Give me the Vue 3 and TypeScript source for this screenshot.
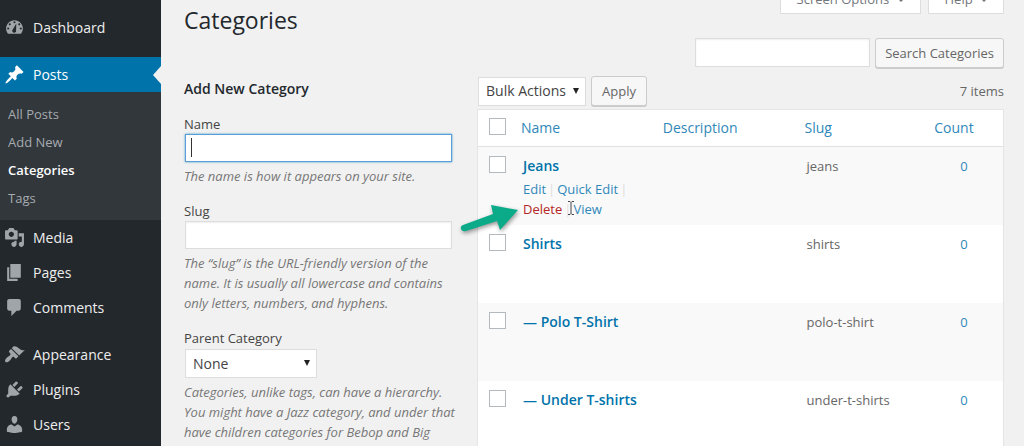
<script setup lang="ts">
import { onMounted, ref } from 'vue'

interface MenuItem {
  label: string
  icon: string
  gap?: boolean
  current?: boolean
  children?: string[]
}

interface Category {
  name: string
  slug: string
  count: number
  actions?: boolean
}

const menu: MenuItem[] = [
  {
    label: 'Dashboard',
    icon: 'M3.76 16h12.48A7.95 7.95 0 0 0 18 11c0-4.41-3.58-8-8-8s-8 3.59-8 8c0 1.9.66 3.63 1.76 5zM10 4a1 1 0 1 1 0 2 1 1 0 0 1 0-2zM5.5 6a1 1 0 1 1 0 2 1 1 0 0 1 0-2zM14.5 6a1 1 0 1 1 0 2 1 1 0 0 1 0-2zM4 10a1 1 0 1 1 0 2 1 1 0 0 1 0-2zM16 10a1 1 0 1 1 0 2 1 1 0 0 1 0-2zM11.7 6.2L11.5 12.5a1.9 1.9 0 1 1-3-.9z'
  },
  {
    label: 'Posts',
    icon: 'M10.44 3.02l1.82-1.82 6.36 6.35-1.83 1.82c-1.05-.68-2.48-.57-3.41.36l-.75.75c-.92.93-1.04 2.35-.35 3.41l-1.83 1.82-2.41-2.41-2.8 2.79c-.42.42-3.38 2.71-3.8 2.29s1.86-3.39 2.28-3.81l2.79-2.79L4.1 9.36l1.83-1.82c1.05.69 2.48.57 3.4-.36l.75-.75c.93-.92 1.05-2.35.36-3.41z',
    gap: true,
    current: true,
    children: ['All Posts', 'Add New', 'Categories', 'Tags']
  },
  {
    label: 'Media',
    icon: 'M13 11V4c0-.55-.45-1-1-1h-1.67L9 1H5L3.67 3H2c-.55 0-1 .45-1 1v7c0 .55.45 1 1 1h10c.55 0 1-.45 1-1zM7 4.5c1.38 0 2.5 1.12 2.5 2.5S8.38 9.5 7 9.5 4.5 8.38 4.5 7 5.62 4.5 7 4.5zM14 6h5v10.5c0 1.38-1.12 2.5-2.5 2.5S14 17.88 14 16.5s1.12-2.5 2.5-2.5c.17 0 .34.02.5.05V9h-3V6zm-4 8.05V13h2v3.5c0 1.38-1.12 2.5-2.5 2.5S7 17.88 7 16.5 8.12 14 9.5 14c.17 0 .34.02.5.05z'
  },
  { label: 'Pages', icon: 'M6 15V2h10v13H6zm-1 1h8v2H3V5h2v11z' },
  {
    label: 'Comments',
    icon: 'M5 2h9c1.1 0 2 .9 2 2v7c0 1.1-.9 2-2 2h-2l-5 5v-5H5c-1.1 0-2-.9-2-2V4c0-1.1.9-2 2-2z'
  },
  {
    label: 'Appearance',
    icon: 'M14.48 11.06L7.41 3.99l1.5-1.5c.5-.56 2.3-.47 3.51.32 1.21.8 1.43 1.28 2.91 2.1 1.18.64 2.45 1.26 4.45.85zm-.71.71L6.7 4.7 4.93 6.47c-.39.39-.39 1.02 0 1.41l1.06 1.06c.39.39.39 1.03 0 1.42-.6.6-1.43 1.11-2.21 1.69-.35.26-.7.53-1.01.84C1.43 14.23.4 16.08 1.4 17.07c.99 1 2.84-.03 4.18-1.36.31-.31.58-.66.85-1.02.57-.78 1.08-1.61 1.69-2.21.39-.39 1.02-.39 1.41 0l1.06 1.06c.39.39 1.02.39 1.41 0z',
    gap: true
  },
  {
    label: 'Plugins',
    icon: 'M13.11 4.36L9.87 7.6 8 5.73l3.24-3.24c.35-.34 1.05-.2 1.56.32.52.51.66 1.21.31 1.55zm-8 1.77l.91-1.12 9.01 9.01-1.19.84c-.71.71-2.63 1.16-3.82 1.16H6.14L4.9 17.26c-.59.59-1.54.59-2.12 0-.59-.58-.59-1.53 0-2.12l1.24-1.24v-3.88c0-1.13.4-3.19 1.09-3.89zm7.26 3.97l3.24-3.24c.34-.35 1.04-.21 1.55.31.52.51.66 1.21.31 1.55l-3.24 3.25z'
  },
  {
    label: 'Users',
    icon: 'M10 9.25c-2.27 0-2.73-3.44-2.73-3.44C7 4.02 7.82 2 9.97 2c2.16 0 2.98 2.02 2.71 3.81 0 0-.41 3.44-2.68 3.44zm0 2.57L12.72 10c2.39 0 4.52 2.33 4.52 4.53v2.49s-3.65 1.13-7.24 1.13c-3.65 0-7.24-1.13-7.24-1.13v-2.49c0-2.25 1.94-4.48 4.47-4.48z'
  }
]

const categories: Category[] = [
  { name: 'Jeans', slug: 'jeans', count: 0, actions: true },
  { name: 'Shirts', slug: 'shirts', count: 0 },
  { name: '— Polo T-Shirt', slug: 'polo-t-shirt', count: 0 },
  { name: '— Under T-shirts', slug: 'under-t-shirts', count: 0 }
]

const name = ref('')
const slug = ref('')
const search = ref('')
const nameField = ref<HTMLInputElement | null>(null)

onMounted(() => nameField.value?.focus())
</script>

<template>
  <div class="admin">
    <nav class="sidebar" aria-label="Main menu">
      <ul class="menu">
        <li v-for="item in menu" :key="item.label" :class="{ gap: item.gap, current: item.current }">
          <a class="menu-link" href="#">
            <svg class="menu-icon" viewBox="0 0 20 20" aria-hidden="true">
              <path :d="item.icon" fill="currentColor" fill-rule="evenodd" />
            </svg>
            <span>{{ item.label }}</span>
          </a>
          <ul v-if="item.children" class="submenu">
            <li v-for="child in item.children" :key="child">
              <a href="#" :class="{ active: child === 'Categories' }">{{ child }}</a>
            </li>
          </ul>
        </li>
      </ul>
    </nav>

    <main class="content">
      <header class="top">
        <h1>Categories</h1>
        <div class="screen-meta">
          <button type="button">Screen Options <span class="chevron"></span></button>
          <button type="button">Help <span class="chevron"></span></button>
        </div>
      </header>

      <form class="search" @submit.prevent>
        <input v-model="search" type="search" aria-label="Search Categories" />
        <button class="button" type="submit">Search Categories</button>
      </form>

      <div class="columns">
        <form class="add-form" @submit.prevent>
          <h2>Add New Category</h2>
          <div class="field">
            <label for="cat-name">Name</label>
            <div class="name-box">
              <input id="cat-name" ref="nameField" v-model="name" type="text" />
              <span v-if="!name" class="text-caret"></span>
            </div>
            <p>The name is how it appears on your site.</p>
          </div>
          <div class="field">
            <label for="cat-slug">Slug</label>
            <input id="cat-slug" v-model="slug" type="text" />
            <p>The “slug” is the URL-friendly version of the name. It is usually all lowercase and contains only letters, numbers, and hyphens.</p>
          </div>
          <div class="field">
            <label for="cat-parent">Parent Category</label>
            <span class="select parent">
              <select id="cat-parent"><option>None</option></select>
            </span>
            <p>Categories, unlike tags, can have a hierarchy. You might have a Jazz category, and under that have children categories for Bebop and Big</p>
          </div>
        </form>

        <section class="list">
          <div class="toolbar">
            <span class="select bulk">
              <select aria-label="Bulk action"><option>Bulk Actions</option></select>
            </span>
            <button class="button" type="button">Apply</button>
            <span class="total">7 items</span>
          </div>
          <table>
            <thead>
              <tr>
                <th class="check"><input type="checkbox" aria-label="Select all" /></th>
                <th class="wide"><a href="#">Name</a></th>
                <th class="wide"><a href="#">Description</a></th>
                <th><a href="#">Slug</a></th>
                <th class="count"><a href="#">Count</a></th>
              </tr>
            </thead>
            <tbody>
              <tr v-for="cat in categories" :key="cat.slug">
                <td class="check"><input type="checkbox" :aria-label="'Select ' + cat.name" /></td>
                <td>
                  <a class="title" href="#">{{ cat.name }}</a>
                  <div v-if="cat.actions" class="actions">
                    <div class="action-line">
                      <a href="#">Edit</a><i>|</i><a href="#">Quick Edit</a><i>|</i>
                    </div>
                    <div class="action-line">
                      <a class="delete" href="#">Delete</a><i>|</i><a href="#">View</a>
                    </div>
                    <svg class="arrow" viewBox="0 0 64 44" aria-hidden="true">
                      <path d="M4 33L34 22 32 13 59 18 41 38 38 29 7 39Q3 40 2 37 1 34 4 33z" fill="#0bab8a" />
                    </svg>
                    <svg class="pointer" viewBox="0 0 8 16" aria-hidden="true">
                      <path d="M1 1.5h2l1 1 1-1h2M4 2.5v11M1 14.5h2l1-1 1 1h2" fill="none" stroke="#444" />
                    </svg>
                  </div>
                </td>
                <td></td>
                <td class="slug">{{ cat.slug }}</td>
                <td class="count"><a href="#">{{ cat.count }}</a></td>
              </tr>
            </tbody>
          </table>
        </section>
      </div>
    </main>
  </div>
</template>

<style>
body {
  margin: 0;
  background: #f1f1f1;
}
</style>

<style scoped>
* {
  box-sizing: border-box;
}

.admin {
  display: flex;
  height: 100vh;
  overflow: hidden;
  background: #f1f1f1;
  color: #444;
  font: 13px/20px 'Open Sans', 'Noto Sans', sans-serif;
}

a {
  color: #3088b9;
  text-decoration: none;
}

ul {
  margin: 0;
  padding: 0;
  list-style: none;
}

input,
select,
button {
  margin: 0;
  font: inherit;
  color: inherit;
}

.sidebar {
  flex: none;
  width: 161px;
  background: #23282d;
}

.gap {
  margin-top: 12px;
}

.menu > li:first-child {
  margin-top: 10px;
}

.menu-link {
  display: flex;
  align-items: center;
  gap: 8px;
  height: 35px;
  padding-left: 4px;
  color: #eee;
  font-size: 14px;
}

.menu-icon {
  width: 21px;
  height: 21px;
  color: #a0a5aa;
}

.current > .menu-link {
  position: relative;
  background: #0073aa;
  color: #fff;
}

.current > .menu-link .menu-icon {
  color: #fff;
}

.current > .menu-link::after {
  content: '';
  position: absolute;
  right: 0;
  top: 9px;
  border: solid transparent;
  border-width: 9px 8px 9px 0;
  border-right-color: #f1f1f1;
}

.submenu {
  padding: 8px 0;
  background: #32373c;
}

.submenu a {
  display: block;
  padding-left: 8px;
  color: #a6abb0;
  line-height: 28px;
}

.submenu a.active {
  color: #fff;
  font-weight: 600;
}

.content {
  flex: 1;
  min-width: 0;
  padding: 0 20px 0 23px;
}

.top {
  display: flex;
  justify-content: space-between;
  align-items: flex-start;
  height: 38px;
}

h1 {
  margin: 5px 0 0;
  color: #23282d;
  font-size: 23px;
  font-weight: 400;
  line-height: 30px;
}

.screen-meta {
  display: flex;
  gap: 7px;
  margin-top: -16px;
}

.screen-meta button {
  height: 30px;
  padding: 0 15px 0 16px;
  border: 1px solid #ddd;
  border-top: 0;
  background: #fff;
  color: #72777c;
  line-height: 28px;
}

.chevron {
  display: inline-block;
  margin: 0 0 2px 4px;
  border: 4px solid transparent;
  border-top-color: #72777c;
  border-bottom: 0;
}

.search {
  display: flex;
  justify-content: flex-end;
  gap: 5px;
}

input[type='text'],
input[type='search'] {
  height: 28px;
  padding: 3px 6px;
  border: 1px solid #ddd;
  background: #fff;
  box-shadow: inset 0 1px 2px rgba(0, 0, 0, 0.07);
  outline: 0;
}

input[type='search'] {
  width: 175px;
  height: 29px;
}

.button {
  height: 30px;
  padding: 0 9px;
  border: 1px solid #ccc;
  border-radius: 3px;
  background: #f7f7f7;
  box-shadow: 0 1px 0 #ccc;
  color: #666;
}

.toolbar .button {
  padding: 0 10px;
}

.columns {
  display: flex;
  gap: 16px;
}

.add-form {
  flex: 0 1 277px;
  padding-top: 11px;
}

h2 {
  margin: 0 0 15px;
  color: #23282d;
  font-size: 14px;
  font-weight: 600;
  line-height: 20px;
}

.field {
  margin-bottom: 15px;
}

.field label {
  display: block;
}

.field input {
  display: block;
  width: 100%;
}

.field > input,
.name-box {
  width: 267px;
  margin-left: 1px;
}

.field p {
  margin: 4px 0 0;
  color: #777;
  font-style: italic;
}

.name-box {
  position: relative;
}

#cat-name {
  border-color: #5b9dd9;
  box-shadow: 0 0 2px rgba(30, 140, 190, 0.8);
  caret-color: transparent;
}

.text-caret {
  position: absolute;
  left: 6px;
  top: 4px;
  width: 1px;
  height: 19px;
  background: #333;
}

.select {
  position: relative;
  display: block;
}

.select select {
  display: block;
  width: 100%;
  height: 29px;
  padding: 0 7px;
  border: 1px solid #ddd;
  border-radius: 0;
  background: #fff;
  appearance: none;
  font-size: 14px;
}

.select::after {
  content: '';
  position: absolute;
  right: 7px;
  top: 11px;
  border: 3px solid transparent;
  border-top: 6px solid #222;
  border-bottom: 0;
}

.parent {
  width: 132px;
  margin: 1px 0 0 1px;
}

.bulk {
  width: 108px;
}

.list {
  flex: 1;
  min-width: 0;
}

.toolbar {
  display: flex;
  align-items: center;
  gap: 5px;
  padding: 8px 0 3px 1px;
}

.total {
  margin-left: auto;
  color: #666;
}

table {
  width: 100%;
  border: 1px solid #e5e5e5;
  border-spacing: 0;
  background: #fff;
  table-layout: fixed;
}

th,
td {
  padding: 9px 8px 0;
  text-align: left;
  vertical-align: top;
  font-weight: 400;
}

th {
  height: 37px;
  padding-top: 8px;
  border-bottom: 1px solid #e1e1e1;
  font-size: 14px;
}

td {
  height: 79px;
  padding-left: 10px;
}

tbody tr:nth-child(odd) {
  background: #f9f9f9;
}

.wide {
  width: 27%;
}

.check {
  width: 35px;
  padding-left: 11px;
}

.check input {
  display: block;
  width: 17px;
  height: 17px;
  border: 1px solid #b4b9be;
  background: #fff;
  appearance: none;
}

.count {
  width: 78px;
  padding-left: 0;
  padding-right: 0;
  text-align: center;
}

th.count {
  padding-right: 20px;
}

.title {
  color: #0073aa;
  font-size: 14px;
  font-weight: 600;
}

.slug {
  color: #666;
}

.actions {
  position: relative;
  padding-top: 3px;
}

.action-line {
  display: flex;
  gap: 2px;
  white-space: nowrap;
}

.action-line i {
  color: #ddd;
  font-style: normal;
}

.action-line .delete {
  color: #b52727;
}

.arrow {
  position: absolute;
  right: 100%;
  top: 16px;
  width: 64px;
  height: 44px;
  filter: drop-shadow(1px 2px 2px rgba(0, 0, 0, 0.4));
}

.pointer {
  position: absolute;
  left: 44px;
  top: 24px;
  width: 8px;
  height: 16px;
}

tbody td {
  height: 78px;
}
</style>
